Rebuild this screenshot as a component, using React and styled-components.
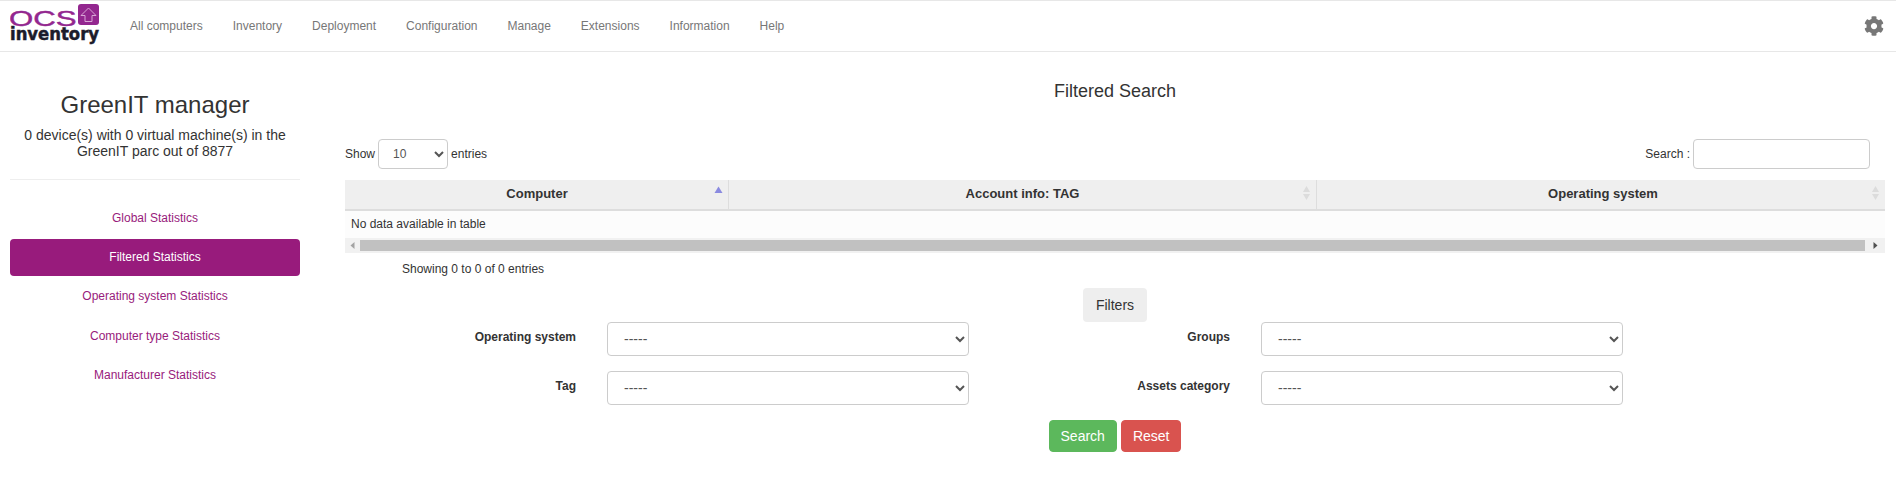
import React from "react";
import styled, { createGlobalStyle } from "styled-components";
import { FaCog } from "react-icons/fa";

const Global = createGlobalStyle`
  html, body { margin: 0; padding: 0; background: #fff; overflow: hidden; }
  body { font-family: "Liberation Sans", Arial, sans-serif; font-size: 12px; color: #333; }
  * { box-sizing: border-box; }
`;

const Navbar = styled.header`
  height: 52px;
  display: flex;
  align-items: center;
  border-top: 1px solid #e7e7e7;
  border-bottom: 1px solid #e7e7e7;
  padding: 0 12px 0 10px;
`;
const Logo = styled.svg`
  width: 92px;
  height: 44px;
  flex: none;
  margin-top: -6px;
`;
const NavList = styled.nav`
  display: flex;
  margin-left: 13px;
  flex: 1;
`;
const NavLink = styled.a`
  padding: 0 15px;
  font-size: 12px;
  line-height: 16px;
  color: #777;
`;
const Gear = styled(FaCog)`
  width: 20px;
  height: 20px;
  color: #777;
`;

const Body = styled.div`
  display: flex;
`;
const Sidebar = styled.aside`
  width: 290px;
  margin-left: 10px;
  flex: none;
  text-align: center;
`;
const Title = styled.h1`
  margin: 39px 0 0;
  font-size: 24px;
  font-weight: 400;
  line-height: 27px;
  color: #333;
`;
const Subtitle = styled.p`
  margin: 9px 0 0;
  font-size: 14px;
  line-height: 16px;
`;
const Rule = styled.hr`
  margin: 20px 0 0;
  border: 0;
  border-top: 1px solid #eee;
`;
const Pills = styled.div`
  margin-top: 19.4px;
  display: flex;
  flex-direction: column;
  gap: 2.3px;
`;
const Pill = styled.a`
  height: 37px;
  display: flex;
  align-items: center;
  justify-content: center;
  border-radius: 4px;
  font-size: 12px;
  color: ${(p) => (p.$active ? "#fff" : "#981b7c")};
  background: ${(p) => (p.$active ? "#981b7c" : "transparent")};
`;

const Main = styled.main`
  width: 1540px;
  margin-left: 45px;
  flex: none;
`;
const Heading = styled.h2`
  margin: 29px 0 0;
  font-size: 18px;
  font-weight: 400;
  line-height: 20px;
  text-align: center;
`;
const Toolbar = styled.div`
  margin-top: 38px;
  height: 30px;
  display: flex;
  align-items: center;
  justify-content: space-between;
  padding-right: 15px;
`;
const ToolGroup = styled.label`
  display: flex;
  align-items: center;
  gap: 3px;
  font-size: 12px;
`;
const PageSelect = styled.select`
  width: 70px;
  height: 30px;
  padding: 0 10px;
  border: 1px solid #ccc;
  border-radius: 4px;
  background: #fff;
  font: 12px "Liberation Sans", Arial, sans-serif;
  color: #555;
`;
const SearchInput = styled.input`
  width: 177px;
  height: 30px;
  border: 1px solid #ccc;
  border-radius: 4px;
  background: #fff;
`;
const Table = styled.div`
  margin-top: 11px;
`;
const HeadRow = styled.div`
  display: grid;
  grid-template-columns: 384px 588px 568px;
  height: 31px;
  background: #efefef;
  border-bottom: 2px solid #ddd;
`;
const HeadCell = styled.div`
  position: relative;
  display: flex;
  align-items: center;
  justify-content: center;
  font-size: 13px;
  font-weight: 700;
  padding: 0 0 3px ${(p) => p.$shift || 0}px;
  border-right: ${(p) => (p.$last ? "0" : "1px solid #ddd")};
`;
const SortIcon = styled.svg`
  position: absolute;
  right: 5px;
  top: 6px;
  width: 9px;
  height: 15px;
`;
const EmptyRow = styled.div`
  height: 27px;
  padding: 0 0 2px 6px;
  display: flex;
  align-items: center;
  background: #fcfcfc;
  font-size: 12px;
`;
const ScrollTrack = styled.div`
  height: 15px;
  display: flex;
  align-items: center;
  background: #f1f1f1;
`;
const ScrollEnd = styled.div`
  width: ${(p) => p.$w}px;
  flex: none;
  display: flex;
  justify-content: center;
`;
const ArrowIcon = styled.svg`
  width: 5px;
  height: 7px;
`;
const ScrollThumb = styled.div`
  flex: 1;
  height: 11px;
  background: #c1c1c1;
`;
const Info = styled.div`
  margin-top: 9px;
  padding-left: 57px;
  font-size: 12px;
  line-height: 14px;
`;
const FiltersRow = styled.div`
  margin-top: 12px;
  display: flex;
  justify-content: center;
`;
const FiltersBadge = styled.div`
  width: 64px;
  height: 34px;
  display: flex;
  align-items: center;
  justify-content: center;
  border-radius: 4px;
  background: #eee;
  font-size: 14px;
`;
const FilterGrid = styled.div`
  display: grid;
  grid-template-columns: 262px 362px 292px 362px;
  row-gap: 15px;
`;
const FilterLabel = styled.label`
  padding: 8px 31px 0 0;
  line-height: 14px;
  font-size: 12px;
  font-weight: 700;
  text-align: right;
`;
const FilterSelect = styled.select`
  width: 100%;
  height: 34px;
  padding: 0 12px;
  border: 1px solid #ccc;
  border-radius: 4px;
  background: #fff;
  font: 14px "Liberation Sans", Arial, sans-serif;
  color: #555;
`;
const Actions = styled.div`
  margin-top: 15px;
  display: flex;
  justify-content: center;
  gap: 4px;
`;
const Button = styled.button`
  height: 32px;
  padding: 0 11px;
  border: 1px solid ${(p) => p.$color};
  border-radius: 4px;
  background: ${(p) => p.$color};
  color: #fff;
  font: 14px "Liberation Sans", Arial, sans-serif;
`;

const SortDouble = () => (
  <SortIcon viewBox="0 0 9 15">
    <path d="M4.5 0 L8 6 H1 Z" fill="#dcdcdc" />
    <path d="M1 8 H8 L4.5 14 Z" fill="#dcdcdc" />
  </SortIcon>
);
const SortUp = () => (
  <SortIcon viewBox="0 0 9 15">
    <path d="M4.5 0.5 L8.5 7 H0.5 Z" fill="#8a8ae0" />
  </SortIcon>
);

const nav = ["All computers", "Inventory", "Deployment", "Configuration", "Manage", "Extensions", "Information", "Help"];
const pills = ["Global Statistics", "Filtered Statistics", "Operating system Statistics", "Computer type Statistics", "Manufacturer Statistics"];
const filters = ["Operating system", "Groups", "Tag", "Assets category"];

export default function App() {
  return (
    <>
      <Global />
      <Navbar>
        <Logo viewBox="0 0 92 44">
          <text transform="translate(-1 25) scale(1.42 1)" fontFamily="Liberation Sans" fontSize="22" fill="#93278f" stroke="#93278f" strokeWidth="0.4">OCS</text>
          <rect x="68" y="3" width="21" height="21" rx="3" fill="#93278f" />
          <path d="M78.5 7 L86 14.5 H82 V20.5 H75 V14.5 H71 Z" fill="none" stroke="#d9a6d6" strokeWidth="1" />
          <text x="0" y="39" fontFamily="DejaVu Sans" fontWeight="700" fontSize="17" textLength="89" lengthAdjust="spacingAndGlyphs" fill="#1c1c2b" stroke="#1c1c2b" strokeWidth="0.5">inventory</text>
        </Logo>
        <NavList>
          {nav.map((n) => (
            <NavLink key={n}>{n}</NavLink>
          ))}
        </NavList>
        <Gear />
      </Navbar>
      <Body>
        <Sidebar>
          <Title>GreenIT manager</Title>
          <Subtitle>0 device(s) with 0 virtual machine(s) in the GreenIT parc out of 8877</Subtitle>
          <Rule />
          <Pills>
            {pills.map((p) => (
              <Pill key={p} $active={p === "Filtered Statistics"}>{p}</Pill>
            ))}
          </Pills>
        </Sidebar>
        <Main>
          <Heading>Filtered Search</Heading>
          <Toolbar>
            <ToolGroup>
              Show
              <PageSelect defaultValue="10">
                <option>10</option>
                <option>25</option>
                <option>50</option>
              </PageSelect>
              entries
            </ToolGroup>
            <ToolGroup>
              Search :
              <SearchInput />
            </ToolGroup>
          </Toolbar>
          <Table>
            <HeadRow>
              <HeadCell $shift={1}>Computer<SortUp /></HeadCell>
              <HeadCell>Account info: TAG<SortDouble /></HeadCell>
              <HeadCell $last $shift={4}>Operating system<SortDouble /></HeadCell>
            </HeadRow>
            <EmptyRow>No data available in table</EmptyRow>
            <ScrollTrack>
              <ScrollEnd $w={15}>
                <ArrowIcon viewBox="0 0 5 7"><path d="M4.5 0 V7 L0.5 3.5 Z" fill="#a3a3a3" /></ArrowIcon>
              </ScrollEnd>
              <ScrollThumb />
              <ScrollEnd $w={20}>
                <ArrowIcon viewBox="0 0 5 7"><path d="M0.5 0 V7 L4.5 3.5 Z" fill="#505050" /></ArrowIcon>
              </ScrollEnd>
            </ScrollTrack>
          </Table>
          <Info>Showing 0 to 0 of 0 entries</Info>
          <FiltersRow>
            <FiltersBadge>Filters</FiltersBadge>
          </FiltersRow>
          <FilterGrid>
            {filters.map((f) => (
              <React.Fragment key={f}>
                <FilterLabel>{f}</FilterLabel>
                <FilterSelect>
                  <option>-----</option>
                </FilterSelect>
              </React.Fragment>
            ))}
          </FilterGrid>
          <Actions>
            <Button $color="#5cb85c">Search</Button>
            <Button $color="#d9534f">Reset</Button>
          </Actions>
        </Main>
      </Body>
    </>
  );
}
